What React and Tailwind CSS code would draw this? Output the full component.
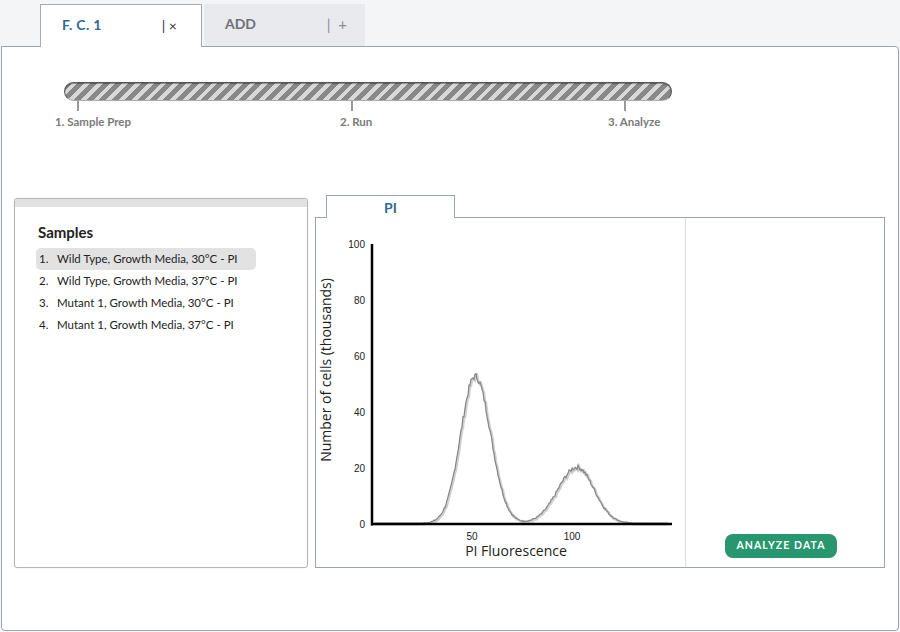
import { useMemo } from 'react';

const SAMPLES = [
  'Wild Type, Growth Media, 30°C - PI',
  'Wild Type, Growth Media, 37°C - PI',
  'Mutant 1, Growth Media, 30°C - PI',
  'Mutant 1, Growth Media, 37°C - PI',
];

const STEPS = [
  { label: '1. Sample Prep', tick: 'left-[13px]', text: 'left-[-9px]' },
  { label: '2. Run', tick: 'left-[287px]', text: 'left-[276px]' },
  { label: '3. Analyze', tick: 'left-[560px]', text: 'left-[544px]' },
];

// chart geometry: x0 = 372 px for 0, 2 px per unit ; y0 = 524, 2.8 px per unit
const X0 = 372;
const Y0 = 524;

function gauss(v, mu, sl, sr) {
  const s = v < mu ? sl : sr;
  return Math.exp(-((v - mu) * (v - mu)) / (2 * s * s));
}

function buildCurve() {
  const pts = [];
  let seed = 7;
  const rnd = () => {
    seed = (seed * 9301 + 49297) % 233280;
    return seed / 233280 - 0.5;
  };
  for (let px = 374; px <= 668; px += 1) {
    const v = (px - X0) / 2;
    let val = 52.5 * gauss(v, 51.5, 7.2, 7.8) + 20 * gauss(v, 102.5, 9.5, 8.5);
    val += rnd() * Math.sqrt(val) * 0.35;
    pts.push(`${px},${(Y0 - 0.8 - Math.max(val, 0) * 2.8).toFixed(1)}`);
  }
  return 'M' + pts.join(' L');
}

function Chart() {
  const d = useMemo(buildCurve, []);
  const yTicks = [0, 20, 40, 60, 80, 100];
  return (
    <svg viewBox="316 218 370 349" className="w-[370px] h-[349px] block">
      {yTicks.map(t => (
        <text key={t} x={365} y={Y0 - t * 2.8 + 3.5} textAnchor="end" fontSize="10"
          fontFamily="'Liberation Sans Narrow','Liberation Sans',sans-serif" fill="#222">{t}</text>
      ))}
      <text x={472} y={540} textAnchor="middle" fontSize="10"
        fontFamily="'Liberation Sans Narrow','Liberation Sans',sans-serif" fill="#222">50</text>
      <text x={572} y={540} textAnchor="middle" fontSize="10"
        fontFamily="'Liberation Sans Narrow','Liberation Sans',sans-serif" fill="#222">100</text>
      <text x={0} y={0} transform="translate(331 370) rotate(-90)" textAnchor="middle" fontSize="14"
        fontFamily="'Open Sans',sans-serif" fill="#222">Number of cells (thousands)</text>
      <text x={516} y={556} textAnchor="middle" fontSize="14"
        fontFamily="'Open Sans',sans-serif" fill="#222">PI Fluorescence</text>
      <path d={d} fill="none" stroke="#d0d0d0" strokeWidth="2.5" transform="translate(1 1)" />
      <path d={d} fill="none" stroke="#858585" strokeWidth="1.2" />
      <line x1={372} y1={244} x2={372} y2={525.5} stroke="#000" strokeWidth="2.5" />
      <line x1={371} y1={524} x2={672} y2={524} stroke="#000" strokeWidth="2.5" />
    </svg>
  );
}

export default function App() {
  return (
    <div className="w-[900px] h-[632px] bg-[#f4f5f7] pt-[4px] font-['Lato',sans-serif] text-[#222]">
      <div className="flex pl-[40px] gap-[2px] h-[42px]">
        <div className="relative z-10 w-[162px] h-[43px] bg-white border border-b-0 border-[#a3adb6] flex items-start pt-[9px] pl-[21px] pr-[24px] justify-between">
          <span className="text-[14px] font-bold text-[#2e6b93] tracking-[0.3px]">F. C. 1</span>
          <span className="text-[14px] text-[#333] mt-[1px]">| ×</span>
        </div>
        <div className="w-[161px] h-[42px] bg-[#e8eaee] flex items-start pt-[9px] pl-[21px] pr-[18px] justify-between">
          <span className="text-[14px] font-bold text-[#6d7179]">ADD</span>
          <span className="text-[15px] text-[#8a8e94]">|&nbsp;&nbsp;+</span>
        </div>
      </div>

      <div className="mx-[1px] h-[585px] bg-white border border-[#9aa5b0] rounded-[4px] rounded-tl-none">
        {/* progress */}
        <div className="relative ml-[62px] mt-[35px] w-[608px] h-[80px]">
          <div className="h-[19px] rounded-full border border-[#555] border-b-[#aaa] bg-[repeating-linear-gradient(135deg,#888_0_5px,#d8d8d8_5px_9px)] shadow-[inset_0_1px_1px_rgba(0,0,0,0.35)]" />
          {STEPS.map(s => (
            <div key={s.label}>
              <div className={`absolute top-[19px] ${s.tick} w-[1.5px] h-[10px] bg-[#999]`} />
              <div className={`absolute top-[31px] ${s.text} text-[11.5px] font-bold text-[#7a7a7a] whitespace-nowrap`}>{s.label}</div>
            </div>
          ))}
        </div>

        <div className="flex mt-[36px] ml-[12px]">
          {/* samples */}
          <div className="w-[294px] h-[370px] border border-[#b4b4b4] rounded-[3px] shadow-[0_0_1px_rgba(0,0,0,0.2)] overflow-hidden">
            <div className="h-[8px] bg-[#e2e2e2]" />
            <div className="px-[21px] pt-[14px]">
              <div className="text-[15px] font-bold text-[#222] pl-[2px] mb-[4px]">Samples</div>
              <ol className="flex flex-col">
                {SAMPLES.map((s, i) => (
                  <li key={s}
                    className={`h-[22px] flex items-center pl-[3px] w-[220px] rounded-[5px] text-[11.5px] text-[#222] whitespace-nowrap ${i === 0 ? 'bg-[#e2e2e2]' : ''}`}>
                    <span className="w-[18px]">{i + 1}.</span>
                    <span>{s}</span>
                  </li>
                ))}
              </ol>
            </div>
          </div>

          {/* chart panel */}
          <div className="ml-[7px] flex flex-col -mt-[3px]">
            <div className="ml-[11px] w-[129px] h-[23px] bg-white border border-b-0 border-[#9aa5b0] flex items-center justify-center relative z-10 -mb-[1px]">
              <span className="text-[14px] font-bold text-[#2e6b93]">PI</span>
            </div>
            <div className="w-[570px] h-[351px] border border-[#9aa5b0] flex">
              <div className="w-[370px] border-r border-[#dcdcdc]">
                <Chart />
              </div>
              <div className="flex-1 flex items-end justify-center pb-[9px] pr-[8px]">
                <button className="h-[24px] px-[11px] rounded-[8px] bg-[#28966e] text-white text-[10.5px] font-bold tracking-[1.1px]">
                  ANALYZE DATA
                </button>
              </div>
            </div>
          </div>
        </div>
      </div>
    </div>
  );
}
